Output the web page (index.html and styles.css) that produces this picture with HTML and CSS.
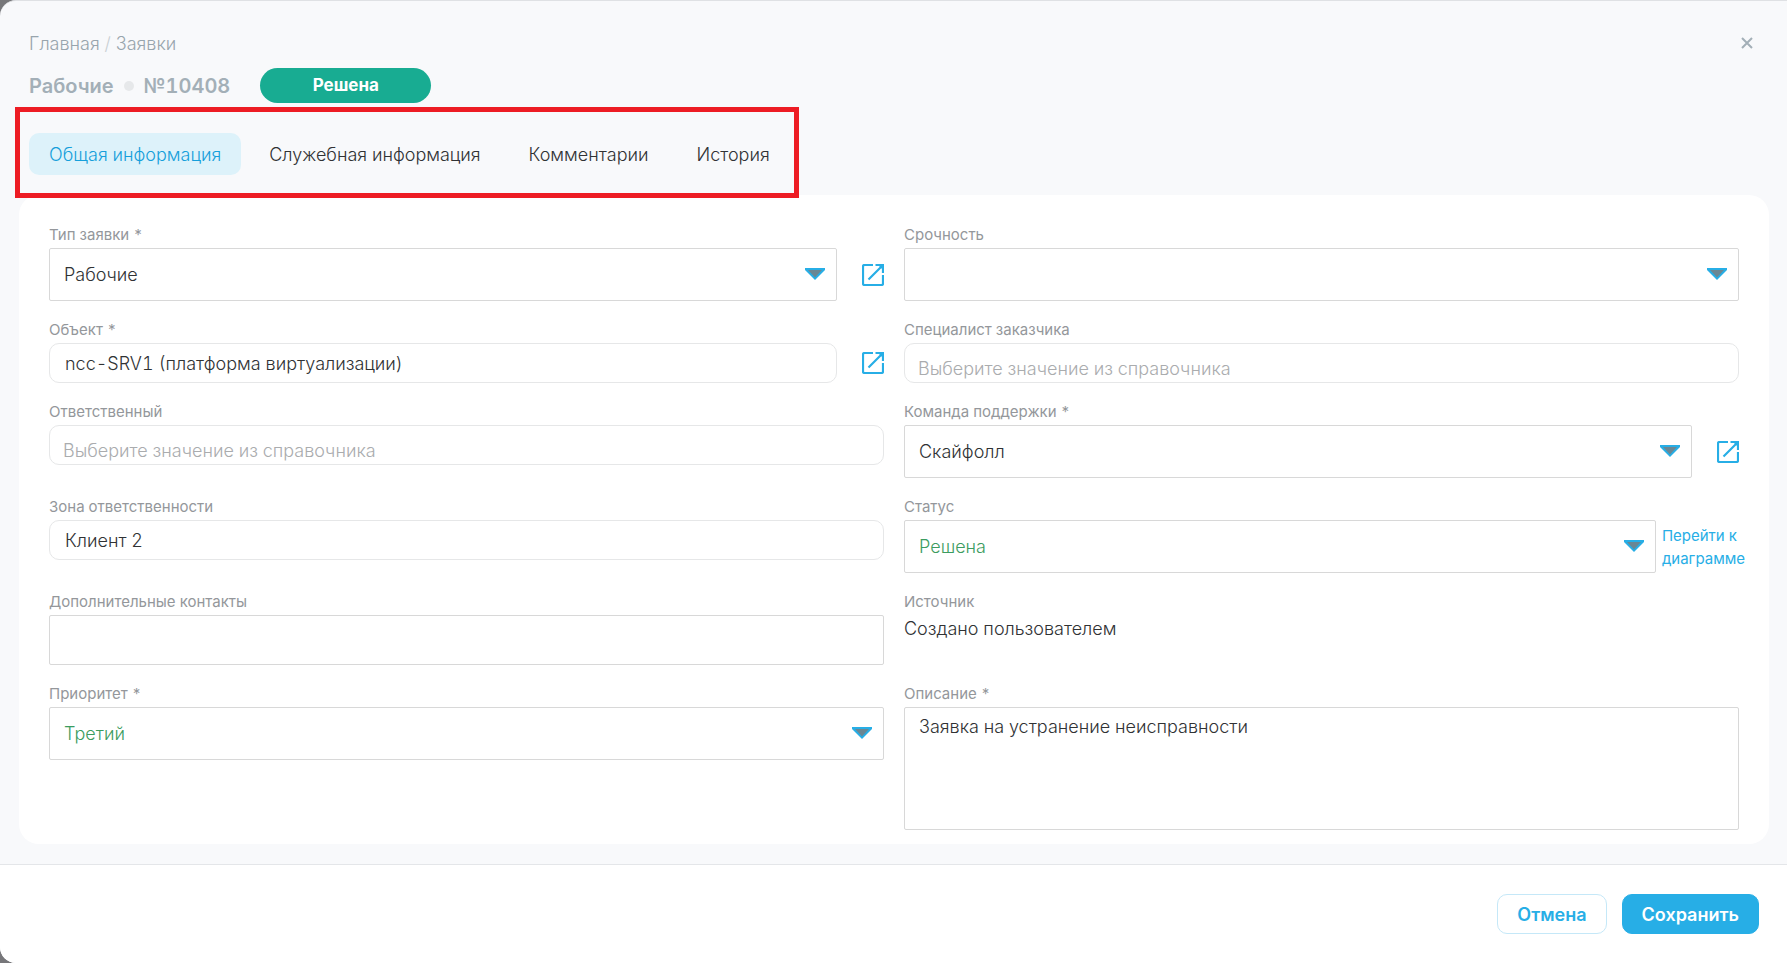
FILE: index.html
```html
<!DOCTYPE html>
<html lang="ru">
<head>
    <meta charset="UTF-8">
    <meta name="viewport" content="width=device-width, initial-scale=1.0">
    <title>Заявка №10408</title>
    <link rel="stylesheet" href="styles.css">
</head>
<body>
    <!-- Общие иконки -->
    <svg class="sprite" aria-hidden="true">
        <symbol id="icon-arrow" viewBox="0 0 20 12">
            <path d="M0 0h20v2L10 12 0 2z" fill="#27aee6"/>
            <path d="M3 2h14l-7 7.500z" fill="#6a8794"/>
        </symbol>
        <symbol id="icon-open" viewBox="0 0 22 22">
            <path d="M11 1H2.500A1.500 1.500 0 0 0 1 2.500v17A1.500 1.500 0 0 0 2.500 21h17a1.500 1.500 0 0 0 1.500-1.500V11" fill="none" stroke="#27aee6" stroke-width="2.200"/>
            <path d="M13.500 1H21v8M20 2 6.500 15.500" fill="none" stroke="#27aee6" stroke-width="2.200"/>
            <path d="M16 1h5v5z" fill="#27aee6"/>
        </symbol>
    </svg>

    <div class="modal">
        <header class="header">
            <div class="header-top">
                <nav class="breadcrumbs">
                    <a href="#">Главная</a> <span class="slash">/</span> <a href="#">Заявки</a>
                </nav>
                <button class="close" type="button" aria-label="Закрыть">
                    <svg width="12" height="12" viewBox="0 0 12 12"><path d="M1 1l10 10M11 1L1 11" stroke="#a3afb7" stroke-width="2"/></svg>
                </button>
            </div>
            <div class="title-row">
                <h1 class="title">Рабочие <span class="dot"></span> №10408</h1>
                <span class="badge">Решена</span>
            </div>
            <nav class="tabs">
                <button class="tab active" type="button">Общая информация</button>
                <button class="tab" type="button">Служебная информация</button>
                <button class="tab" type="button">Комментарии</button>
                <button class="tab" type="button">История</button>
            </nav>
        </header>

        <form class="card" id="request-form">
            <div class="field">
                <label for="type">Тип заявки *</label>
                <div class="control">
                    <div class="select">
                        <select id="type"><option>Рабочие</option></select>
                        <svg class="arrow"><use href="#icon-arrow"/></svg>
                    </div>
                    <a class="open" href="#" aria-label="Открыть"><svg><use href="#icon-open"/></svg></a>
                </div>
            </div>
            <div class="field">
                <label for="urgency">Срочность</label>
                <div class="control">
                    <div class="select">
                        <select id="urgency"><option></option></select>
                        <svg class="arrow"><use href="#icon-arrow"/></svg>
                    </div>
                </div>
            </div>

            <div class="field">
                <label for="object">Объект *</label>
                <div class="control">
                    <input class="lookup" id="object" type="text" value="ncc-SRV1 (платформа виртуализации)">
                    <a class="open" href="#" aria-label="Открыть"><svg><use href="#icon-open"/></svg></a>
                </div>
            </div>
            <div class="field">
                <label for="specialist">Специалист заказчика</label>
                <input class="lookup empty" id="specialist" type="text" placeholder="Выберите значение из справочника">
            </div>

            <div class="field">
                <label for="responsible">Ответственный</label>
                <input class="lookup empty" id="responsible" type="text" placeholder="Выберите значение из справочника">
            </div>
            <div class="field">
                <label for="team">Команда поддержки *</label>
                <div class="control">
                    <div class="select">
                        <select id="team"><option>Скайфолл</option></select>
                        <svg class="arrow"><use href="#icon-arrow"/></svg>
                    </div>
                    <a class="open" href="#" aria-label="Открыть"><svg><use href="#icon-open"/></svg></a>
                </div>
            </div>

            <div class="field">
                <label for="zone">Зона ответственности</label>
                <input class="lookup" id="zone" type="text" value="Клиент 2">
            </div>
            <div class="field">
                <label for="status">Статус</label>
                <div class="control with-link">
                    <div class="select">
                        <select class="green" id="status"><option>Решена</option></select>
                        <svg class="arrow"><use href="#icon-arrow"/></svg>
                    </div>
                    <a class="diagram" href="#">Перейти к<br>диаграмме</a>
                </div>
            </div>

            <div class="field">
                <label for="contacts">Дополнительные контакты</label>
                <input class="text" id="contacts" type="text">
            </div>
            <div class="field">
                <span class="label">Источник</span>
                <p class="value">Создано пользователем</p>
            </div>

            <div class="field">
                <label for="priority">Приоритет *</label>
                <div class="control">
                    <div class="select">
                        <select class="green" id="priority"><option>Третий</option></select>
                        <svg class="arrow"><use href="#icon-arrow"/></svg>
                    </div>
                </div>
            </div>
            <div class="field">
                <label for="description">Описание *</label>
                <textarea id="description">Заявка на устранение неисправности</textarea>
            </div>
        </form>

        <footer class="footer">
            <button class="btn" type="button">Отмена</button>
            <button class="btn primary" type="submit" form="request-form">Сохранить</button>
        </footer>
    </div>
</body>
</html>
```
FILE: styles.css
```css
* {
    box-sizing: border-box;
}

body {
    margin: 0;
    background-color: #77777a;
    color: #303234;
    font-family: Inter, "Liberation Sans", sans-serif;
    font-size: 18px;
    font-weight: 300;
    font-variant-numeric: tabular-nums;
}

a {
    color: inherit;
    text-decoration: none;
}

button, input, select, textarea {
    font: inherit;
    color: inherit;
}

button {
    border: none;
    background: none;
    cursor: pointer;
}

.sprite {
    display: none;
}

.modal {
    display: flex;
    flex-direction: column;
    min-height: 100vh;
    background-color: #f8f9fb;
    border-top: 1px solid #dfe1e4;
    border-radius: 16px 0 0 16px;
    overflow: hidden;
}

/* Шапка */
.header {
    padding: 31px 29px 20px;
}

.header-top {
    display: flex;
    justify-content: space-between;
    align-items: center;
    height: 22px;
}

.breadcrumbs {
    color: #98a5ad;
}

.slash {
    color: #c9d0d4;
}

.close {
    display: flex;
    padding: 5px;
}

.title-row {
    display: flex;
    align-items: center;
    gap: 30px;
    margin-top: 14px;
}

.title {
    display: flex;
    align-items: center;
    gap: 10px;
    margin: 0;
    color: #a3afb7;
    font-size: 20px;
    font-weight: 600;
    line-height: 22px;
}

.dot {
    width: 10px;
    height: 10px;
    border-radius: 50%;
    background-color: #e6e8ea;
}

.badge {
    width: 171px;
    border-radius: 18px;
    background-color: #18ac92;
    color: #fff;
    font-size: 17px;
    font-weight: 700;
    line-height: 35px;
    text-align: center;
}

.tabs {
    position: relative;
    display: flex;
    gap: 8px;
    width: fit-content;
    margin-top: 30px;
}

/* Рамка вокруг вкладок */
.tabs::after {
    content: "";
    position: absolute;
    inset: -26px -9px -23px -14px;
    border: 5px solid #ed1c24;
    pointer-events: none;
}

.tab {
    height: 42px;
    padding: 0 20px;
    border-radius: 10px;
    color: #303234;
}

.tab.active {
    background-color: #ddf2fa;
    color: #169fdb;
}

/* Форма */
.card {
    display: grid;
    grid-template-columns: 1fr 1fr;
    gap: 20px;
    margin: 0 18px 20px 19px;
    padding: 31px 30px 14px;
    border-radius: 20px;
    background-color: #fff;
}

.field {
    display: flex;
    flex-direction: column;
    min-width: 0;
}

.field label,
.label {
    margin-bottom: 4px;
    color: #94979b;
    font-size: 15px;
    font-weight: 400;
    line-height: 18px;
}

.control {
    display: flex;
    align-items: center;
    gap: 25px;
}

.select {
    position: relative;
    flex: 1;
}

select {
    display: block;
    width: 100%;
    height: 53px;
    padding: 0 40px 0 14px;
    border: 1px solid #d8d8d8;
    border-radius: 2px;
    background-color: #fff;
    appearance: none;
}

.green {
    color: #3c9c60;
}

.arrow {
    position: absolute;
    top: 20px;
    right: 12px;
    width: 20px;
    height: 12px;
    pointer-events: none;
}

.open svg {
    display: block;
    width: 22px;
    height: 22px;
}

.lookup {
    flex: 1;
    width: 100%;
    min-height: 40px;
    max-height: 40px;
    padding: 0 15px;
    border: 1px solid #e6e7e8;
    border-radius: 10px;
    background-color: #fff;
}

.lookup.empty {
    padding: 11px 13px 0;
}

.lookup::placeholder {
    color: #aaacae;
    opacity: 1;
}

.with-link {
    gap: 6px;
    margin-right: -6px;
}

.diagram {
    color: #27aee6;
    font-size: 15px;
    font-weight: 400;
    line-height: 23px;
    white-space: nowrap;
}

.text {
    height: 50px;
    padding: 0 14px;
    border: 1px solid #d8d8d8;
    border-radius: 2px;
}

.value {
    margin: 0;
    line-height: 28px;
}

textarea {
    display: block;
    height: 123px;
    padding: 8px 14px;
    border: 1px solid #d8d8d8;
    border-radius: 2px;
    line-height: 22px;
    resize: none;
}

/* Кнопки */
.footer {
    display: flex;
    justify-content: flex-end;
    gap: 15px;
    margin-top: auto;
    padding: 29px 28px;
    border-top: 1px solid #e4e6e9;
    background-color: #fff;
}

.btn {
    height: 40px;
    padding: 0 19px;
    border: 1px solid #c5e8f8;
    border-radius: 10px;
    color: #27aee6;
    font-weight: 600;
}

.btn.primary {
    border-color: #27aee6;
    background-color: #27aee6;
    color: #fff;
}
```
